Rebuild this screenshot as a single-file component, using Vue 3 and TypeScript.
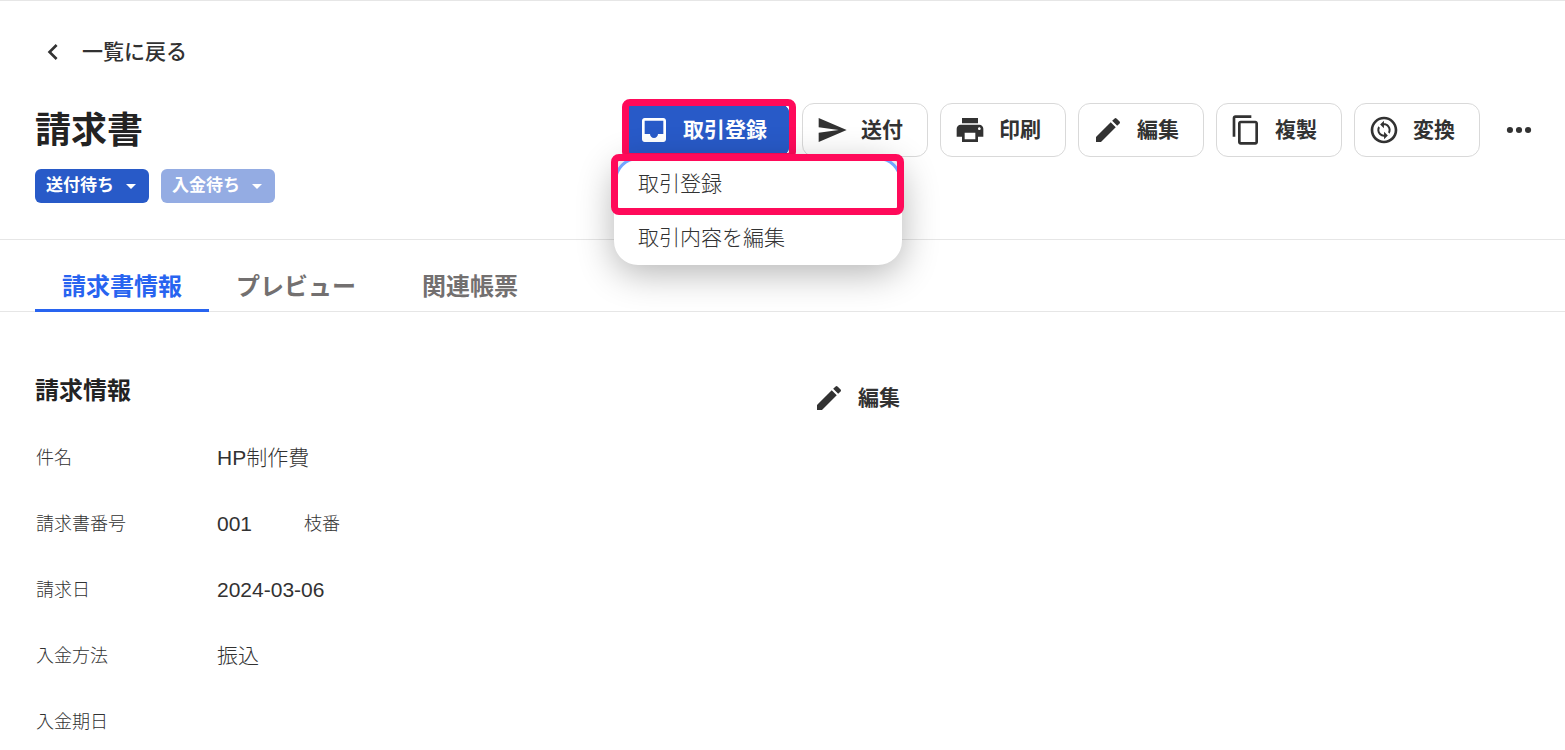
<script setup lang="ts">
import { ref } from 'vue'

interface Action {
  id: string
  label: string
  paths: string[]
}

interface Field {
  label: string
  value: string
  sub?: string
}

const editPath =
  'M3 17.25V21h3.75L17.81 9.94l-3.75-3.75L3 17.25zM20.71 7.04c.39-.39.39-1.02 0-1.41l-2.34-2.34a.996.996 0 0 0-1.41 0l-1.83 1.83 3.75 3.75 1.83-1.83z'

const actions: Action[] = [
  { id: 'send', label: '送付', paths: ['M2.01 21 23 12 2.01 3 2 10l15 2-15 2z'] },
  {
    id: 'print',
    label: '印刷',
    paths: [
      'M19 8H5c-1.66 0-3 1.34-3 3v6h4v4h12v-4h4v-6c0-1.66-1.34-3-3-3zm-3 11H8v-5h8v5zm3-7c-.55 0-1-.45-1-1s.45-1 1-1 1 .45 1 1-.45 1-1 1zm-1-9H6v4h12V3z',
    ],
  },
  { id: 'edit', label: '編集', paths: [editPath] },
  {
    id: 'copy',
    label: '複製',
    paths: [
      'M16 1H4c-1.1 0-2 .9-2 2v14h2V3h12V1zm3 4H8c-1.1 0-2 .9-2 2v14c0 1.1.9 2 2 2h11c1.1 0 2-.9 2-2V7c0-1.1-.9-2-2-2zm0 16H8V7h11v14z',
    ],
  },
  {
    id: 'convert',
    label: '変換',
    paths: [
      'M12 2C6.48 2 2 6.48 2 12s4.48 10 10 10 10-4.48 10-10S17.52 2 12 2zm0 18c-4.41 0-8-3.59-8-8s3.59-8 8-8 8 3.59 8 8-3.59 8-8 8z',
      'M12.06 19v-2.01H12c-1.28 0-2.56-.49-3.54-1.46-1.71-1.71-1.92-4.35-.64-6.29l1.1 1.1c-.71 1.33-.53 3.01.59 4.13.7.7 1.62 1.03 2.54 1.01v-2.14l2.83 2.83L12.06 19zM16.17 14.76l-1.1-1.1c.71-1.33.53-3.01-.59-4.13C13.79 8.84 12.9 8.5 12 8.5h-.06v2.15L9.11 7.83 11.94 5v2.02c1.3-.02 2.61.45 3.6 1.45 1.7 1.7 1.91 4.35.63 6.29z',
    ],
  },
]

const tabs = [
  { id: 'info', label: '請求書情報' },
  { id: 'preview', label: 'プレビュー' },
  { id: 'related', label: '関連帳票' },
]
const activeTab = ref('info')
const menuOpen = ref(true)

const fields: Field[] = [
  { label: '件名', value: 'HP制作費' },
  { label: '請求書番号', value: '001', sub: '枝番' },
  { label: '請求日', value: '2024-03-06' },
  { label: '入金方法', value: '振込' },
  { label: '入金期日', value: '' },
]
</script>

<template>
  <div class="page">
    <header class="header">
      <a class="back" href="#list">
        <svg class="icon" viewBox="0 0 24 24" aria-hidden="true">
          <path d="M15.41 7.41 14 6l-6 6 6 6 1.41-1.41L10.83 12z" />
        </svg>
        <span>一覧に戻る</span>
      </a>
      <div class="title-row">
        <div>
          <h1 class="title">請求書</h1>
          <div class="badges">
            <button type="button" class="badge">
              送付待ち
              <svg class="caret" viewBox="0 0 10 5" aria-hidden="true"><path d="M0 0h10L5 5z" /></svg>
            </button>
            <button type="button" class="badge badge-light">
              入金待ち
              <svg class="caret" viewBox="0 0 10 5" aria-hidden="true"><path d="M0 0h10L5 5z" /></svg>
            </button>
          </div>
        </div>
        <div class="actions">
          <div class="register">
            <button type="button" class="action primary" :aria-expanded="menuOpen" @click="menuOpen = !menuOpen">
              <svg class="icon" viewBox="0 0 24 24" aria-hidden="true">
                <path d="M19 3H5c-1.1 0-2 .9-2 2v14c0 1.1.9 2 2 2h14c1.1 0 2-.9 2-2V5c0-1.1-.9-2-2-2zm0 2v10h-4c0 1.66-1.34 3-3 3s-3-1.34-3-3H5V5h14z" />
              </svg>
              <span>取引登録</span>
            </button>
            <span class="mark mark-button"></span>
            <div v-if="menuOpen" class="menu">
              <button type="button" class="menu-item focused">取引登録</button>
              <button type="button" class="menu-item">取引内容を編集</button>
              <span class="mark mark-item"></span>
            </div>
          </div>
          <button v-for="action in actions" :key="action.id" type="button" class="action">
            <svg class="icon" viewBox="0 0 24 24" aria-hidden="true">
              <path v-for="d in action.paths" :key="d" :d="d" />
            </svg>
            <span>{{ action.label }}</span>
          </button>
          <button type="button" class="more" aria-label="その他">
            <svg class="icon" viewBox="0 0 24 24" aria-hidden="true">
              <circle cx="5.2" cy="12" r="2.3" />
              <circle cx="12" cy="12" r="2.3" />
              <circle cx="18.8" cy="12" r="2.3" />
            </svg>
          </button>
        </div>
      </div>
    </header>

    <nav class="tabs" role="tablist">
      <button
        v-for="tab in tabs"
        :key="tab.id"
        type="button"
        role="tab"
        class="tab"
        :class="[tab.id, { active: tab.id === activeTab }]"
        :aria-selected="tab.id === activeTab"
        @click="activeTab = tab.id"
      >
        {{ tab.label }}
      </button>
    </nav>

    <main class="section">
      <div class="section-head">
        <h2 class="section-title">請求情報</h2>
        <button type="button" class="action plain">
          <svg class="icon" viewBox="0 0 24 24" aria-hidden="true"><path :d="editPath" /></svg>
          <span>編集</span>
        </button>
      </div>
      <dl class="fields">
        <div v-for="field in fields" :key="field.label" class="field">
          <dt class="field-label">{{ field.label }}</dt>
          <dd class="field-value">
            <span>{{ field.value }}</span>
            <span v-if="field.sub" class="field-sub">{{ field.sub }}</span>
          </dd>
        </div>
      </dl>
    </main>
  </div>
</template>

<style>
body {
  margin: 0;
  background: #fff;
  overflow: hidden;
}
</style>

<style scoped>
.page {
  border-top: 1px solid #e6e6e6;
  color: #323232;
  font-family: 'Liberation Sans', 'Noto Sans CJK JP', sans-serif;
  font-size: 21px;
  line-height: 30px;
}
button {
  border: 0;
  padding: 0;
  background: none;
  color: inherit;
  font: inherit;
  white-space: nowrap;
  cursor: pointer;
}
.icon {
  flex: none;
  width: 32px;
  height: 32px;
  fill: currentColor;
}
.header {
  padding: 24px 19px 36px 35px;
  border-bottom: 1px solid #e6e6e6;
}
.back {
  display: inline-flex;
  align-items: center;
  gap: 13px;
  height: 54px;
  padding-left: 2px;
  color: inherit;
  font-weight: 500;
  text-decoration: none;
  vertical-align: top;
}
.title-row {
  display: flex;
  justify-content: space-between;
  align-items: flex-start;
  margin-top: 24px;
}
.title {
  margin: 0;
  color: #232323;
  font-size: 36px;
  line-height: 56px;
  font-weight: 700;
}
.badges {
  display: flex;
  gap: 12px;
  margin-top: 10px;
}
.badge {
  display: flex;
  align-items: center;
  gap: 12px;
  height: 34px;
  padding: 0 13px 0 11px;
  border-radius: 6px;
  background: #285ac8;
  color: #fff;
  font-size: 17px;
  font-weight: 700;
}
.badge-light {
  background: #94ace3;
}
.caret {
  width: 10px;
  height: 5px;
  fill: currentColor;
}
.actions {
  display: flex;
  gap: 12px;
}
.action {
  display: flex;
  align-items: center;
  gap: 13px;
  box-sizing: border-box;
  height: 54px;
  padding: 0 24px 0 13px;
  border: 1px solid #d9d9d9;
  border-radius: 12px;
  font-weight: 700;
}
.primary {
  padding-right: 22px;
  border-color: #285ac8;
  background: #285ac8;
  color: #fff;
}
.plain {
  border-color: transparent;
}
.register {
  position: relative;
  z-index: 1;
}
.mark {
  position: absolute;
  box-sizing: border-box;
  border: 7px solid #ff0a5a;
  border-radius: 8px;
  pointer-events: none;
}
.mark-button {
  inset: -4px -6px -3px -2px;
}
.menu {
  position: absolute;
  top: 54px;
  right: -112px;
  width: 288px;
  border-radius: 24px;
  background: #fff;
  box-shadow: 0 8px 36px rgba(0, 0, 0, 0.3);
}
.menu-item {
  display: block;
  width: 100%;
  height: 54px;
  padding: 0 24px 1px;
  font-weight: 300;
  text-align: left;
}
.focused {
  border-radius: 24px 24px 0 0;
  box-shadow: inset 0 0 0 3px #73a5ff;
}
.mark-item {
  inset: -3px -2px 50px -3px;
}
.more {
  display: grid;
  place-items: center;
  width: 54px;
  height: 54px;
}
.tabs {
  display: flex;
  height: 71px;
  padding: 0 35px;
  border-bottom: 1px solid #e6e6e6;
}
.tab {
  height: 72px;
  padding: 24px 27px 0;
  box-sizing: border-box;
  border-bottom: 3px solid transparent;
  color: #737070;
  font-size: 24px;
  font-weight: 700;
}
.tab.preview {
  padding-right: 39px;
}
.tab.active {
  border-color: #2864f0;
  color: #2864f0;
}
.section {
  max-width: 890px;
  padding: 59px 35px 0;
}
.section-head {
  display: flex;
  justify-content: space-between;
  align-items: flex-start;
}
.section-title {
  margin: 0;
  color: #232323;
  font-size: 24px;
  line-height: 40px;
  font-weight: 700;
}
.fields {
  margin: 0;
  padding-left: 1px;
}
.field {
  display: flex;
  align-items: center;
  height: 66px;
  font-weight: 300;
}
.field-label {
  width: 181px;
  font-size: 18px;
}
.field-value {
  display: flex;
  align-items: center;
  margin: 0;
}
.field-sub {
  margin-left: 52px;
  font-size: 18px;
}
</style>
